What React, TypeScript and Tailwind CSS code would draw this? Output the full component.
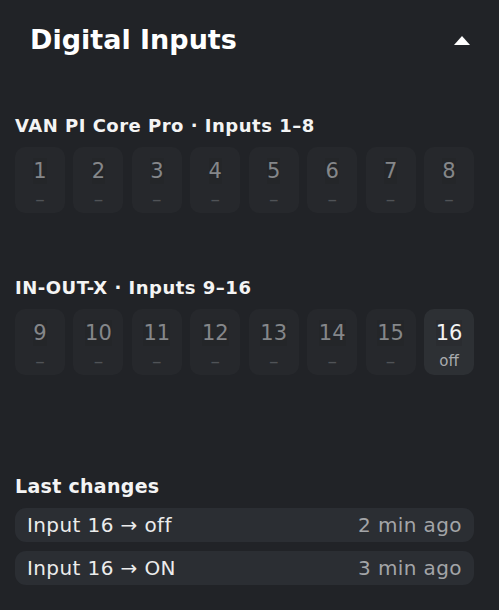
import { useState } from 'react';

type Input = { n: number; state: 'on' | 'off' | null };

const coreInputs: Input[] = [1, 2, 3, 4, 5, 6, 7, 8].map((n) => ({ n, state: null }));
const extInputs: Input[] = [9, 10, 11, 12, 13, 14, 15, 16].map((n) => ({
  n,
  state: n === 16 ? 'off' : null,
}));

const changes = [
  { label: 'Input 16 → off', time: '2 min ago' },
  { label: 'Input 16 → ON', time: '3 min ago' },
];

function Tile({ input }: { input: Input }) {
  const known = input.state !== null;
  return (
    <div
      className={`h-[66px] rounded-[10px] flex flex-col items-center pt-[11px] ${
        known ? 'bg-[#2d3034]' : 'bg-[#26282c]'
      }`}
    >
      <span
        className={`text-[21px] leading-[26px] ${
          known ? 'text-[#f2f2f2] bg-[#2a2c30]' : 'text-[#85878a] bg-[#242629]'
        }`}
      >
        {input.n}
      </span>
      <span
        className={`mt-[5px] leading-[20px] ${
          known ? 'text-[15px] text-[#a9abae]' : 'text-[19px] text-[#505357]'
        }`}
      >
        {known ? input.state : '–'}
      </span>
    </div>
  );
}

function Group({ title, inputs }: { title: string; inputs: Input[] }) {
  return (
    <section>
      <h3 className="text-[18px] leading-[24px] font-bold tracking-[0.5px] text-[#f4f4f4]">
        {title}
      </h3>
      <div className="mt-[9px] grid grid-cols-8 gap-[8.5px]">
        {inputs.map((i) => (
          <Tile key={i.n} input={i} />
        ))}
      </div>
    </section>
  );
}

export default function App() {
  const [open, setOpen] = useState(true);

  return (
    <div className="min-h-[610px] bg-[#212327] font-['DejaVu_Sans','Noto_Sans',sans-serif]">
      {/* Header */}
      <div className="flex items-center justify-between pl-[30px] pr-[29px] pt-[20px] h-[60px]">
        <h2 className="text-[27px] leading-[36px] font-bold text-white">Digital Inputs</h2>
        <button onClick={() => setOpen(!open)} className="w-[16px] h-[10px]">
          <svg width="16" height="10" viewBox="0 0 16 10">
            <path d={open ? 'M8 1L16 10H0Z' : 'M0 0H16L8 9Z'} fill="#ffffff" />
          </svg>
        </button>
      </div>

      {open && (
        <div className="w-[474px] pl-[15px] pt-[54px]">
          <Group title="VAN PI Core Pro · Inputs 1–8" inputs={coreInputs} />
          <div className="mt-[63px]">
            <Group title="IN-OUT-X · Inputs 9–16" inputs={extInputs} />
          </div>

          {/* Recent changes */}
          <div className="mt-[99px]">
            <h3 className="text-[19px] leading-[24px] font-bold tracking-[0.3px] text-[#f4f4f4]">
              Last changes
            </h3>
            <ul className="mt-[10px] flex flex-col gap-[9px]">
              {changes.map((c) => (
                <li
                  key={c.time}
                  className="h-[34px] rounded-[11px] bg-[#2b2e33] flex items-center justify-between pl-[12px] pr-[12px]"
                >
                  <span className="text-[20px] tracking-[0.4px] text-[#ececec]">{c.label}</span>
                  <span className="text-[20px] tracking-[0.4px] text-[#a3a5a8]">{c.time}</span>
                </li>
              ))}
            </ul>
          </div>
        </div>
      )}
    </div>
  );
}
